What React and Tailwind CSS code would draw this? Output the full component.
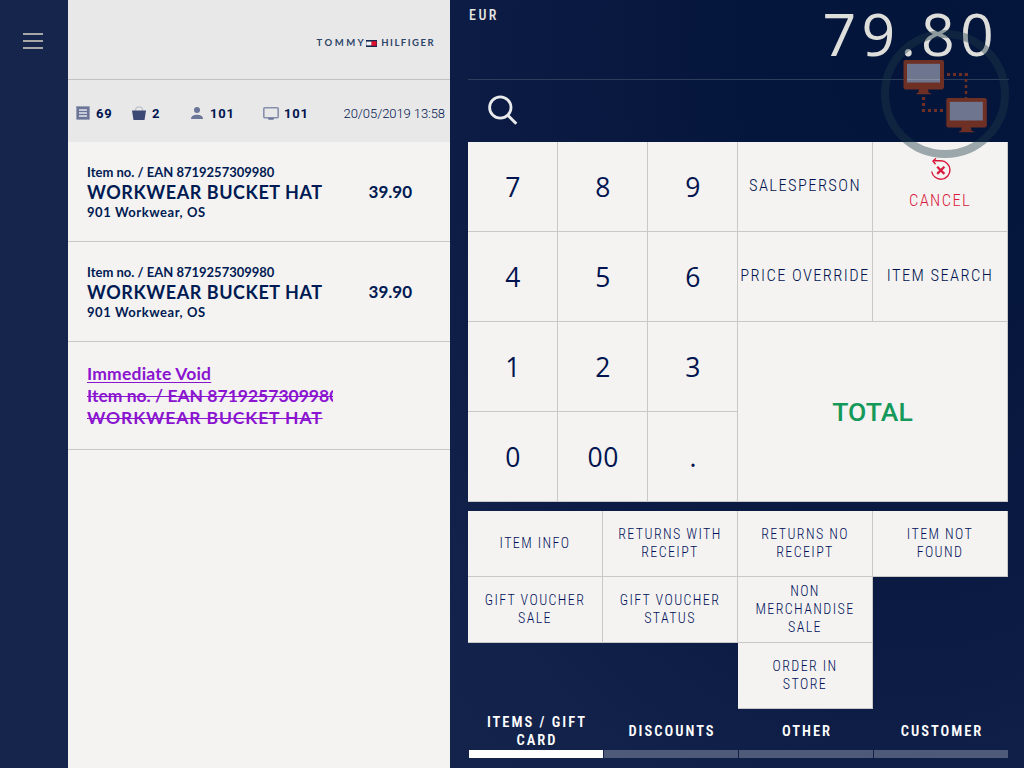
const keyText = "font-['Roboto'] font-light text-[16.5px] leading-[20px] [font-stretch:75%] tracking-[1.4px] -mt-px";
const statText = "font-['Roboto'] font-bold text-[13px] leading-none tracking-[0.8px]";

function Logo() {
  return (
    <div className="flex items-center font-['Lato'] text-[9.5px] leading-none font-bold text-[#2d4568]">
      <span className="tracking-[2.5px]">TOMMY</span>
      <svg width="11" height="7" viewBox="0 0 11 7" className="mr-[4px]">
        <path d="M0 0h11v7H0V5.200h5.500V1.800H0z" fill="#14284f" />
        <rect y="1.8" width="5.5" height="3.4" fill="#f3f3f5" />
        <rect x="5.5" y="1.2" width="5" height="4.6" fill="#e0102f" />
        <path d="M0 1v5" stroke="#14284f" strokeWidth="0.6" />
      </svg>
      <span className="tracking-[1.5px]">HILFIGER</span>
    </div>
  );
}

function ReceiptIcon() {
  return (
    <svg width="14" height="14" viewBox="0 0 14 14">
      <path d="M0.5 0.5h13v13h-13z" fill="#6a7597" stroke="#8d96b0" strokeDasharray="1.2 1" />
      <path d="M3 4h8M3 7h8M3 10h8" stroke="#c5cad8" strokeWidth="1.8" />
    </svg>
  );
}

function BasketIcon() {
  return (
    <svg width="14" height="14" viewBox="0 0 14 14">
      <path d="M3.500 5V4a3.500 3.200 0 0 1 7 0v1" fill="none" stroke="#c2c4cd" strokeWidth="1.3" />
      <path d="M0 4.500h14L12.500 14h-11z" fill="#3c4975" />
    </svg>
  );
}

function PersonIcon() {
  return (
    <svg width="12" height="12" viewBox="0 0 12 12">
      <circle cx="6" cy="3" r="3" fill="#6a7597" />
      <path d="M0 12c0-3 3-4.300 6-4.300s6 1.300 6 4.300z" fill="#6a7597" />
    </svg>
  );
}

function ScreenIcon() {
  return (
    <svg width="16" height="13" viewBox="0 0 16 13">
      <rect x="0.8" y="0.8" width="14.4" height="10" rx="1" fill="none" stroke="#868fab" strokeWidth="1.6" />
      <path d="M5 11h6l-.5 1.800h-5z" fill="#6a7597" />
    </svg>
  );
}

function CancelIcon() {
  return (
    <svg width="22" height="24" viewBox="0 0 22 24" fill="none" stroke="#d8193c" className="relative left-px">
      <path d="M1.700 13.500a9.200 9.200 0 1 0 9.200-10.700H3.200" strokeWidth="1.400" />
      <path d="M6 0.300L3 3l2.500 3.200" strokeWidth="1.400" />
      <path d="M7.200 8.700l7.200 7.200M14.400 8.700l-7.200 7.200" strokeWidth="2.200" />
    </svg>
  );
}

function Monitor({ x, y }) {
  return (
    <g transform={`translate(${x} ${y})`}>
      <path d="M15.500 29h9l.8 4h2v1.300H13V33h1.700z" fill="#6e3024" />
      <path d="M1.500 0h37.500l1.500 1.500v26L39 29.500H1.500L0 28V1.500z" fill="#6e3024" />
      <rect x="3.500" y="3.800" width="33" height="18.700" fill="#6e758e" />
    </g>
  );
}

function NetworkBadge() {
  return (
    <svg width="128" height="128" viewBox="0 0 128 128" className="absolute left-[881px] top-[30px] pointer-events-none">
      <circle cx="64" cy="64" r="60" fill="none" stroke="#1c3a47" strokeOpacity="0.41" strokeWidth="8" />
      <g fill="none" stroke="#6e3024">
        <path d="M66 44.500h21" strokeWidth="3" strokeDasharray="3 3" />
        <path d="M85 43v26" strokeWidth="2.500" strokeDasharray="3 3" />
        <path d="M42.500 67v17" strokeWidth="3" strokeDasharray="3 3" />
        <path d="M41 80.500h24" strokeWidth="3" strokeDasharray="3 3" />
      </g>
      <Monitor x={22.500} y={30} />
      <Monitor x={65.300} y={68} />
      <path d="M26 49.500h33" stroke="#878da0" strokeWidth="1" />
    </svg>
  );
}

function Item() {
  return (
    <div className="h-[100px] border-b border-[#c8c8c8] pt-[20px] pl-[19px] pr-[38px] font-['Lato'] font-bold text-[#001a53] whitespace-nowrap">
      <div className="text-[13px] leading-[20px]">Item no. / EAN 8719257309980</div>
      <div className="flex justify-between text-[18px] leading-[20px]">
        <span className="tracking-[0.55px]">WORKWEAR BUCKET HAT</span>
        <span className="text-[17px]">39.90</span>
      </div>
      <div className="text-[13px] leading-[20px] tracking-[0.55px]">901 Workwear, OS</div>
    </div>
  );
}

function Key({ children, className = "" }) {
  return (
    <button className={"flex flex-col items-center justify-center whitespace-nowrap bg-[#f4f3f1] border-r border-b border-[#c8c8c8] " + className}>
      {children}
    </button>
  );
}

function Digit({ d }) {
  return (
    <Key>
      <span className="pl-[1.500px] pt-px font-['Open_Sans'] font-normal text-[26.5px] leading-none text-[#001450] tracking-[0.6px]">{d}</span>
    </Key>
  );
}

function Action({ lines, className = "" }) {
  return (
    <Key className={className}>
      <div className="-mt-px flex flex-col items-center">
        {lines.map((l) => (
          <span key={l} className="font-['Roboto'] font-light text-[14px] leading-[18px] [font-stretch:75%] tracking-[1.4px] text-[#00105a]">{l}</span>
        ))}
      </div>
    </Key>
  );
}

function Tab({ lines, active }) {
  return (
    <div className="flex flex-col">
      <div className="h-[38px] flex flex-col items-center justify-center pt-px pl-[2px] font-['Roboto'] font-semibold text-[14.5px] leading-[18px] [font-stretch:75%] tracking-[2px] text-white whitespace-nowrap">
        {lines.map((l) => <span key={l}>{l}</span>)}
      </div>
      <div className={active ? "h-[8px] -ml-0 bg-white" : "h-[8px] bg-[#4f5a78]"} />
    </div>
  );
}

export default function App() {
  return (
    <div className="relative flex w-[1024px] h-[768px] overflow-hidden bg-[#14244b] bg-[radial-gradient(ellipse_640px_900px_at_900px_60px,#04153b_0%,#05163c_25%,#0c1b43_65%,#12224a_90%,#16254c_130%)]">
      <aside className="w-[68px] flex flex-col items-center pt-[33px] gap-[5px] pr-[2px]">
        <div className="w-[20px] h-[2px] bg-[#a7a7a8]" />
        <div className="w-[20px] h-[2px] bg-[#a7a7a8]" />
        <div className="w-[20px] h-[2px] bg-[#a7a7a8]" />
      </aside>

      <section className="w-[382px] bg-[#f4f3f1]">
        <div className="h-[80px] bg-[#e8e8e8] border-b border-[#c2c2c3] flex justify-end pr-[15px] pt-[7px]">
          <Logo />
        </div>
        <div className="h-[62px] bg-[#e8e8e8] flex items-center pt-[4px] pl-[8px] pr-[5px] text-[#00144f]">
          <div className="w-[56px] flex items-center gap-[6px]"><ReceiptIcon /><span className={statText}>69</span></div>
          <div className="w-[59px] flex items-center gap-[6px]"><BasketIcon /><span className={statText}>2</span></div>
          <div className="w-[72px] flex items-center gap-[7px]"><PersonIcon /><span className={statText}>101</span></div>
          <div className="flex items-center gap-[5px]"><ScreenIcon /><span className={statText}>101</span></div>
          <span className="ml-auto font-['Roboto'] font-light text-[13px] leading-none tracking-[-0.08px] whitespace-nowrap">20/05/2019 13:58</span>
        </div>
        <Item />
        <Item />
        <div className="h-[108px] border-b border-[#c8c8c8] pt-[21px] pl-[19px] font-['Lato'] font-bold text-[17.5px] leading-[22px] text-[#8a14cf] whitespace-nowrap">
          <div className="w-[246px] overflow-hidden underline decoration-1 underline-offset-2 tracking-[0.2px]">Immediate Void</div>
          <div className="w-[246px] overflow-hidden line-through decoration-1">Item no. / EAN 8719257309980</div>
          <div className="w-[246px] overflow-hidden line-through decoration-1 tracking-[0.88px]">WORKWEAR BUCKET HAT</div>
        </div>
      </section>

      <main className="ml-[18px] w-[541px]">
        <div className="h-[80px] w-[541px] border-b border-[#2f3d5d] flex justify-between">
          <span className="pt-[7px] pl-px font-['Roboto'] font-medium text-[14px] leading-[17px] [font-stretch:75%] tracking-[2.5px] text-[#e6e6e4]">EUR</span>
          <span className="pt-[3px] pr-[10px] font-['Open_Sans'] font-[370] text-[59px] leading-[60px] tracking-[5.2px] text-[#dededb]">79.80</span>
        </div>
        <div className="h-[62px] pl-[19px] pt-[14px]">
          <svg width="34" height="34" viewBox="0 0 34 34" fill="none" stroke="#e9eaec">
            <circle cx="13.300" cy="13.500" r="10.700" strokeWidth="2.800" />
            <path d="M20.500 21l8.800 8.800" strokeWidth="3" />
          </svg>
        </div>

        <div className="grid w-[540px] grid-cols-[90px_90px_90px_135px_135px] grid-rows-[90px_90px_90px_90px]">
          <Digit d="7" /><Digit d="8" /><Digit d="9" />
          <Key><span className={keyText + " text-[#00144f]"}>SALESPERSON</span></Key>
          <Key className="text-[#d8193c]">
            <div className="-mt-[8px] flex flex-col items-center">
              <CancelIcon />
              <span className={keyText + " pt-[10px] -mb-[4px]"}>CANCEL</span>
            </div>
          </Key>
          <Digit d="4" /><Digit d="5" /><Digit d="6" />
          <Key><span className={keyText + " text-[#00144f]"}>PRICE OVERRIDE</span></Key>
          <Key><span className={keyText + " text-[#00144f]"}>ITEM SEARCH</span></Key>
          <Digit d="1" /><Digit d="2" /><Digit d="3" />
          <Key className="col-span-2 row-span-2">
            <span className="pt-[2px] font-['Roboto'] font-medium text-[26.5px] leading-none tracking-[0.1px] text-[#14995a]">TOTAL</span>
          </Key>
          <Digit d="0" /><Digit d="00" /><Digit d="." />
        </div>

        <div className="mt-[9px] grid w-[540px] grid-cols-4 grid-rows-[66px_66px_66px]">
          <Action lines={["ITEM INFO"]} />
          <Action lines={["RETURNS WITH", "RECEIPT"]} />
          <Action lines={["RETURNS NO", "RECEIPT"]} />
          <Action lines={["ITEM NOT", "FOUND"]} />
          <Action lines={["GIFT VOUCHER", "SALE"]} />
          <Action lines={["GIFT VOUCHER", "STATUS"]} />
          <Action lines={["NON", "MERCHANDISE", "SALE"]} />
          <Action lines={["ORDER IN", "STORE"]} className="col-start-3" />
        </div>

        <div className="mt-[3px] ml-px grid w-[539px] grid-cols-4 gap-x-px">
          <Tab lines={["ITEMS / GIFT", "CARD"]} active />
          <Tab lines={["DISCOUNTS"]} />
          <Tab lines={["OTHER"]} />
          <Tab lines={["CUSTOMER"]} />
        </div>
      </main>
      <NetworkBadge />
    </div>
  );
}
